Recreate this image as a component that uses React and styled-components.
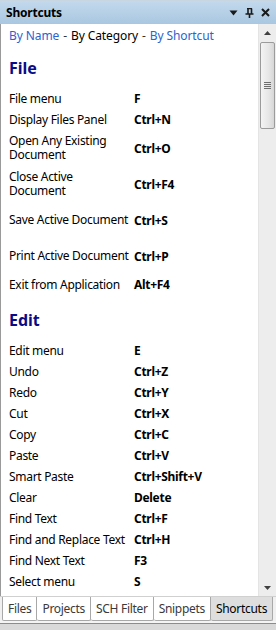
import React from "react";
import styled, { createGlobalStyle } from "styled-components";

const GlobalStyle = createGlobalStyle`
html, body {
    margin: 0;
    padding: 0;
    background: #ffffff;
}
body {
    font-family: "Noto Sans", "Open Sans", sans-serif;
}
`;

const sections = [
    {
        title: "File",
        items: [
            ["File menu", "F"],
            ["Display Files Panel", "Ctrl+N"],
            ["Open Any Existing\nDocument", "Ctrl+O", true],
            ["Close Active\nDocument", "Ctrl+F4", true],
            ["Save Active Document", "Ctrl+S", true],
            ["Print Active Document", "Ctrl+P", true],
            ["Exit from Application", "Alt+F4"],
        ],
    },
    {
        title: "Edit",
        items: [
            ["Edit menu", "E"],
            ["Undo", "Ctrl+Z"],
            ["Redo", "Ctrl+Y"],
            ["Cut", "Ctrl+X"],
            ["Copy", "Ctrl+C"],
            ["Paste", "Ctrl+V"],
            ["Smart Paste", "Ctrl+Shift+V"],
            ["Clear", "Delete"],
            ["Find Text", "Ctrl+F"],
            ["Find and Replace Text", "Ctrl+H"],
            ["Find Next Text", "F3"],
            ["Select menu", "S"],
            ["Select All Objects", "Ctrl+A"],
        ],
    },
];

const tabs = ["Files", "Projects", "SCH Filter", "Snippets", "Shortcuts"];

const App = () => {
    return (
        <Panel>
            <GlobalStyle />
            <TitleBar>
                <Title>Shortcuts</Title>
                <TitleButtons>
                    <svg width="9" height="6" viewBox="0 0 9 6">
                        <path d="M0.5 0.5 H8.5 L4.5 5.5 Z" fill="#1a1a1a" />
                    </svg>
                    <svg width="9" height="10" viewBox="0 0 9 10">
                        <path d="M2 0.5 H7 M3 0.5 V6 M6.5 0.5 V6 M0.5 6 H8.5 M4.5 6 V10" stroke="#1a1a1a" strokeWidth="1.6" fill="none" />
                    </svg>
                    <svg width="9" height="9" viewBox="0 0 9 9">
                        <path d="M1 1 L8 8 M8 1 L1 8" stroke="#1a1a1a" strokeWidth="2" />
                    </svg>
                </TitleButtons>
            </TitleBar>
            <Body>
                <Content>
                    <Links>
                        <Link>By Name</Link>
                        <Sep>-</Sep>
                        <span>By Category</span>
                        <Sep>-</Sep>
                        <Link>By Shortcut</Link>
                    </Links>
                    {sections.map((section) => (
                        <Section key={section.title}>
                            <Heading>{section.title}</Heading>
                            {section.items.map(([label, keys, tall]) => (
                                <Row key={label} $tall={tall}>
                                    <Label>{label}</Label>
                                    <Keys>{keys}</Keys>
                                </Row>
                            ))}
                        </Section>
                    ))}
                </Content>
                <Scrollbar>
                    <ArrowButton>
                        <svg width="7" height="4" viewBox="0 0 7 4">
                            <path d="M0 4 L3.5 0 L7 4 Z" fill="#404040" />
                        </svg>
                    </ArrowButton>
                    <Track>
                        <Thumb>
                            <Grip />
                        </Thumb>
                    </Track>
                    <ArrowButton>
                        <svg width="7" height="4" viewBox="0 0 7 4">
                            <path d="M0 0 L7 0 L3.5 4 Z" fill="#404040" />
                        </svg>
                    </ArrowButton>
                </Scrollbar>
            </Body>
            <TabStrip>
                {tabs.map((tab) => (
                    <Tab key={tab} $active={tab === "Shortcuts"}>
                        {tab}
                    </Tab>
                ))}
            </TabStrip>
            <Footer />
        </Panel>
    );
};

const Panel = styled.div`
width: 276px;
height: 630px;
display: flex;
flex-direction: column;
background: #f0f0f0;
overflow: hidden;
`;

const TitleBar = styled.div`
height: 23px;
flex: none;
display: flex;
align-items: center;
justify-content: space-between;
padding: 0 6px;
border-top: 1px solid #c8d6e2;
background: linear-gradient(#c3d9ec, #a9c7e1);
`;

const Title = styled.div`
font-size: 12px;
font-weight: bold;
color: #000;
letter-spacing: -0.2px;
`;

const TitleButtons = styled.div`
display: flex;
align-items: center;
gap: 7px;
`;

const Body = styled.div`
flex: 1;
display: flex;
min-height: 0;
border-left: 1px solid #9a9a9a;
background: #ffffff;
`;

const Content = styled.div`
flex: 1;
overflow: hidden;
padding: 4px 0 0 8px;
`;

const Links = styled.div`
display: flex;
gap: 4px;
font-size: 12px;
line-height: 15px;
color: #000;
letter-spacing: -0.1px;
white-space: nowrap;
`;

const Link = styled.span`
color: #2e62cf;
`;

const Sep = styled.span`
color: #333;
`;

const Section = styled.div`
margin-top: 15px;
`;

const Heading = styled.div`
font-size: 16px;
line-height: 20px;
font-weight: bold;
color: #0b0b85;
margin-bottom: 10px;
`;

const Row = styled.div`
display: grid;
grid-template-columns: 125px 1fr;
align-items: center;
height: ${({ $tall }) => ($tall ? "36px" : "21px")};
font-size: 12px;
color: #000;
white-space: nowrap;
`;

const Label = styled.div`
white-space: pre-line;
line-height: 14px;
letter-spacing: -0.3px;
`;

const Keys = styled.div`
font-weight: bold;
letter-spacing: -0.3px;
`;

const Scrollbar = styled.div`
width: 17px;
flex: none;
display: flex;
flex-direction: column;
background: #ededed;
border-left: 1px solid #e4e4e4;
`;

const ArrowButton = styled.div`
height: 17px;
flex: none;
display: flex;
align-items: center;
justify-content: center;
`;

const Track = styled.div`
flex: 1;
`;

const Thumb = styled.div`
margin: 1px 1px 0 1px;
height: 87px;
box-sizing: border-box;
border: 1px solid #9b9b9b;
border-radius: 2px;
background: linear-gradient(90deg, #f4f4f4, #e6e6e6 60%, #d6d6d6);
display: flex;
align-items: center;
justify-content: center;
`;

const Grip = styled.div`
width: 7px;
height: 7px;
background: repeating-linear-gradient(#6e6e6e 0 1px, transparent 1px 2px);
`;

const TabStrip = styled.div`
height: 24px;
flex: none;
display: flex;
align-items: stretch;
padding-left: 2px;
background: #f0f0f0;
border-top: 1px solid #d0d0d0;
`;

const Tab = styled.div`
display: flex;
align-items: center;
padding: 0 5px 1px 5px;
font-size: 12px;
letter-spacing: -0.3px;
white-space: nowrap;
color: ${({ $active }) => ($active ? "#000" : "#3a3a3a")};
background: ${({ $active }) => ($active ? "#dedede" : "#ffffff")};
border: 1px solid #a8a8a8;
border-top: none;
border-left-width: 0;
border-radius: 0 0 2px 2px;
&:first-child {
    border-left-width: 1px;
}
`;

const Footer = styled.div`
height: 9px;
flex: none;
box-sizing: border-box;
border-top: 2px solid #f4f4f4;
box-shadow: inset 0 1px 0 #8c8c8c;
background: #d9d9d9;
`;

export default App;
